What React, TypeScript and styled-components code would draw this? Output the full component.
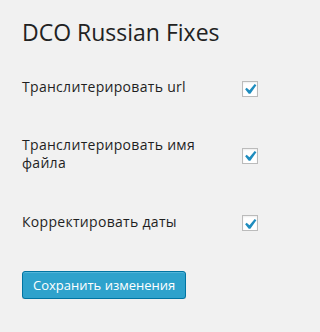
import React from 'react';
import styled, { createGlobalStyle } from 'styled-components';

const GlobalStyle = createGlobalStyle`
    html, body {
        margin: 0;
        padding: 0;
        background: #f1f1f1;
    }
    body {
        font-family: 'Open Sans', 'Liberation Sans', sans-serif;
        color: #222;
    }
`;

const Wrap = styled.div`
    padding: 18px 10px 0 22px;
`;

const Title = styled.h2`
    margin: 0;
    font-size: 23px;
    line-height: 29px;
    font-weight: 400;
    color: #222;
`;

const Form = styled.form`
    margin-top: 11px;
`;

const Row = styled.div`
    display: grid;
    grid-template-columns: 210px 1fr;
    align-items: center;
`;

const Label = styled.div`
    width: 200px;
    padding: 20px 0;
    font-size: 14px;
    line-height: 18.2px;
    letter-spacing: 0.3px;
    color: #1f1f1f;
`;

const BoxCell = styled.div`
    padding-left: 10px;
    display: flex;
    align-items: center;
    margin-top: 3px;
`;

const Box = styled.span`
    box-sizing: border-box;
    width: 16px;
    height: 16px;
    border: 1px solid #bbb;
    background: #fff;
    box-shadow: inset 0 1px 2px rgba(0, 0, 0, 0.07);
    display: flex;
    align-items: center;
    justify-content: center;
`;

const Check = styled.svg`
    flex: none;
    margin-top: 1px;
`;

const Submit = styled.div`
    margin-top: 20px;
`;

const Button = styled.button`
    box-sizing: border-box;
    height: 28px;
    padding: 0 10px 1px;
    font-family: 'Open Sans', 'Liberation Sans', sans-serif;
    font-size: 13px;
    line-height: 26px;
    color: #fff;
    background: #2ea2cc;
    border: 1px solid #0074a2;
    border-radius: 3px;
    box-shadow: inset 0 1px 0 rgba(120, 200, 230, 0.5), 0 1px 0 rgba(0, 0, 0, 0.15);
    cursor: pointer;
`;

const options = [
    'Транслитерировать url',
    'Транслитерировать имя файла',
    'Корректировать даты',
];

function CheckMark() {
    return (
        <Check width="18" height="18" viewBox="0 0 20 20">
            <path d="M15.2 4.4l1.9 1.3-6.7 9.6H8.6L4.6 10.2l1.7-1.6 3.1 2.8z" fill="#1e8cbe" />
        </Check>
    );
}

export default function App() {
    return (
        <>
            <GlobalStyle />
            <Wrap>
                <Title>DCO Russian Fixes</Title>
                <Form onSubmit={(e) => e.preventDefault()}>
                    {options.map((text) => (
                        <Row key={text}>
                            <Label>{text}</Label>
                            <BoxCell>
                                <Box>
                                    <CheckMark />
                                </Box>
                            </BoxCell>
                        </Row>
                    ))}
                    <Submit>
                        <Button type="submit">Сохранить изменения</Button>
                    </Submit>
                </Form>
            </Wrap>
        </>
    );
}
